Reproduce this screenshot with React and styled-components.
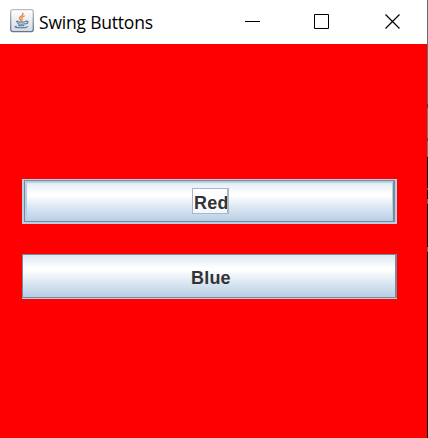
import React from "react";
import styled, { createGlobalStyle } from "styled-components";

const GlobalStyle = createGlobalStyle`
  html, body { margin: 0; padding: 0; overflow: hidden; }
  * { box-sizing: border-box; }
`;

const Desktop = styled.div`
  width: 428px;
  height: 438px;
  padding-right: 1px;
  background: linear-gradient(
    #6b6b6b 0 104px, #3f3f3f 104px 108px, #777 108px 138px, #4a4a4a 138px 141px,
    #777 141px 157px, #000 157px 188px, #666 188px 190px, #000 190px 199px,
    #666 199px 204px, #000 204px 247px, #666 247px 252px, #000 252px
  );
`;

const Window = styled.div`
  display: flex;
  flex-direction: column;
  width: 427px;
  height: 438px;
  background: #f00;
`;

const TitleBar = styled.header`
  display: flex;
  align-items: flex-start;
  height: 44px;
  flex: none;
  padding: 9px 0 0 10px;
  background: #fff;
`;

const Title = styled.span`
  flex: 1;
  margin-left: 5px;
  font: 17.5px/26px "Open Sans", "Noto Sans", sans-serif;
  letter-spacing: -0.2px;
  white-space: nowrap;
  color: #000;
`;

const Controls = styled.div`
  display: flex;
  gap: 54px;
  padding: 4px 26px 0 0;
`;

const Control = styled.svg`
  display: block;
  width: 16px;
  height: 17px;
  fill: none;
  stroke: #000;
  overflow: visible;
`;

const JavaIcon = styled.svg`
  display: block;
  width: 24px;
  height: 24px;
  flex: none;
`;

const Content = styled.main`
  display: flex;
  flex-direction: column;
  gap: 30px;
  padding: 135px 30px 0 22px;
`;

const MetalButton = styled.button`
  display: block;
  width: 375px;
  height: 45px;
  padding: ${(p) => (p.$focused ? "1px 2px 2px" : "0 0 1px")};
  border: 0;
  border-radius: 0;
  background: #b8cfe5;
  font: bold 18px/21px "Liberation Sans", Arial, sans-serif;
  letter-spacing: 0.2px;
  color: #333;
`;

const Face = styled.span`
  display: flex;
  align-items: center;
  justify-content: center;
  height: 100%;
  border: solid #7a8a99;
  border-width: 1px 2px 1px 1px;
  box-shadow: ${(p) => (p.$focused ? "inset 0 0 0 1px #b8cfe5, inset 1px 1px 0 1px #b8cfe5" : "none")};
  background: linear-gradient(#dde8f3 0%, #fff 31%, #fff 36%, #dde8f3 64%, #b8cfe5 100%);
`;

const Label = styled.span`
  display: block;
  width: ${(p) => (p.$focused ? 37 : 40)}px;
  height: ${(p) => (p.$focused ? 26 : 21)}px;
  padding: ${(p) => (p.$focused ? "4px 0 0 1px" : "1px 0 0")};
  border: solid #a3b8cc;
  border-width: ${(p) => (p.$focused ? "1px 2px 1px 1px" : "0")};
  margin: ${(p) => (p.$focused ? "0 0 1px 3px" : "2px 0 0 4px")};
  background: ${(p) => (p.$focused ? "linear-gradient(#fff 50%, #f1f6fa)" : "none")};
  text-align: left;
  overflow: hidden;
  white-space: nowrap;
`;

function JavaLogo() {
  return (
    <JavaIcon viewBox="0 0 24 24" aria-label="Java">
      <defs>
        <linearGradient id="tile" x1="0" y1="0" x2="0" y2="1">
          <stop offset="0" stopColor="#fff" />
          <stop offset="1" stopColor="#d3d9e0" />
        </linearGradient>
        <linearGradient id="edge" x1="0" y1="0" x2="0" y2="1">
          <stop offset="0" stopColor="#b4bdc8" />
          <stop offset="1" stopColor="#61758b" />
        </linearGradient>
      </defs>
      <rect x=".7" y=".7" width="22.6" height="21.9" rx="2" fill="url(#tile)" stroke="url(#edge)" strokeWidth="1.3" />
      <g fill="none" strokeLinecap="round">
        <path d="M12.7 4.3c1.5 2.2-2.9 2.8-3.2 4.6-.1 1.2 1.2 1.9 1.7 2.6" stroke="#ee8134" strokeWidth="1.4" />
        <path d="M14.3 6.9c-1.7.7-2.8 1.6-2.5 2.4.3.8.9 1.2.2 2.1" stroke="#ee8134" strokeWidth="1.1" />
        <g stroke="#557b98" strokeWidth="1.1">
          <path d="M8 12c-3 .7-1.4 1.2 3.3 1.1 1.9 0 3.5-.2 4.6-.6" />
          <path d="M7.7 14.2c.4 1.3 5.5 1.1 7.1.6M8.6 16.1c.6.9 3.7.9 5.3.3" />
          <path d="M16 12.2c2.8-.6 2.7 2.1-.5 2.8" />
          <path d="M6.4 17.2c-2.7.6-1 1.5 4.8 1.5 4.2 0 6-.6 6.1-1.1" />
        </g>
      </g>
    </JavaIcon>
  );
}

function SwingButton({ children, focused }) {
  return (
    <MetalButton $focused={focused}>
      <Face $focused={focused}>
        <Label $focused={focused}>{children}</Label>
      </Face>
    </MetalButton>
  );
}

export default function App() {
  return (
    <>
      <GlobalStyle />
      <Desktop>
        <Window>
          <TitleBar>
            <JavaLogo />
            <Title>Swing Buttons</Title>
            <Controls>
              <Control viewBox="0 0 16 17" aria-label="Minimize"><path d="M0 8.5h15" /></Control>
              <Control viewBox="0 0 16 17" aria-label="Maximize"><path d="M-.5 1.5h14v14h-14z" /></Control>
              <Control viewBox="0 0 16 17" aria-label="Close"><path d="M.5 1.5l14 14m0-14l-14 14" strokeWidth="1.2" /></Control>
            </Controls>
          </TitleBar>
          <Content>
            <SwingButton focused>Red</SwingButton>
            <SwingButton>Blue</SwingButton>
          </Content>
        </Window>
      </Desktop>
    </>
  );
}
